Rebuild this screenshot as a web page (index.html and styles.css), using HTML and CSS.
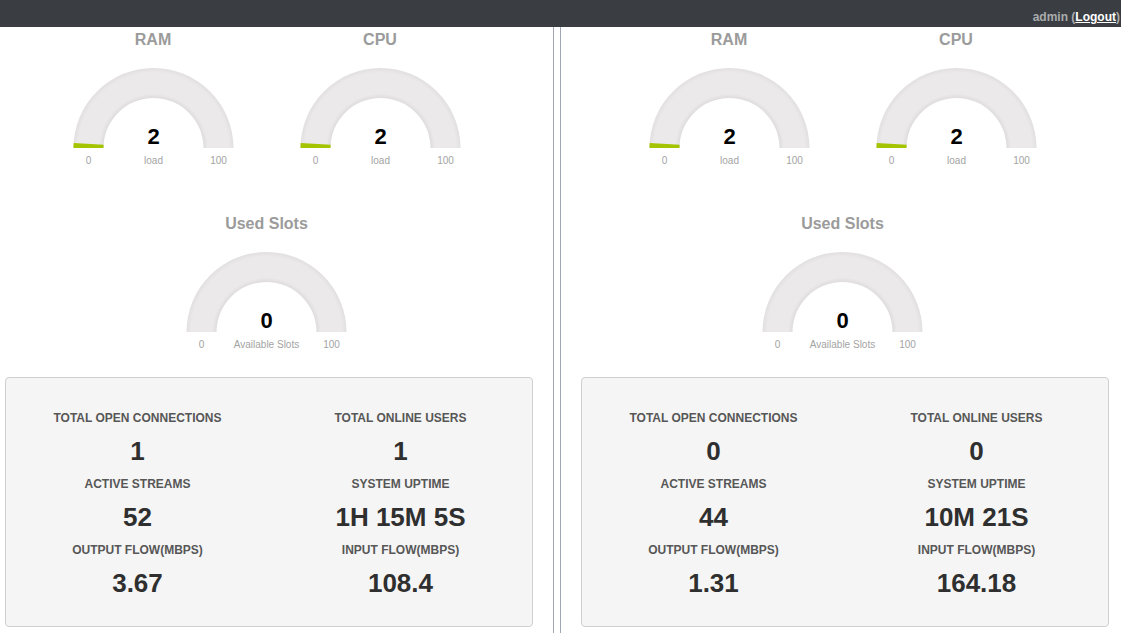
FILE: index.html
```html
<!DOCTYPE html>
<html>
<head>
<meta charset="utf-8">
<link rel="stylesheet" href="styles.css">
</head>
<body>
<div class="topbar"><span class="user">admin (<a class="logout" href="#">Logout</a>)</span></div>
<div class="panels">
  <div class="panel panel-left">
    <div class="gauges">
      <div class="gauge-row">
        <div class="gauge">
          <div class="gauge-title">RAM</div>
          <svg class="gauge-svg" width="227" height="120" viewBox="0 0 227 120">
            <defs>
              <radialGradient id="g1" gradientUnits="userSpaceOnUse" cx="113.5" cy="99" r="80">
                <stop offset="0.625" stop-color="#dedcdc"/>
                <stop offset="0.68" stop-color="#ebe9e9"/>
                <stop offset="0.94" stop-color="#ebe9e9"/>
                <stop offset="1" stop-color="#e1dfdf"/>
              </radialGradient>
            </defs>
            <path d="M33.5 99 A80 80 0 0 1 193.5 99 L163.5 99 A50 50 0 0 0 63.5 99 Z" fill="url(#g1)"/>
            <path d="M33.5 99 A80 80 0 0 1 33.66 93.98 L63.6 95.86 A50 50 0 0 0 63.5 99 Z" fill="#a4c400"/>
            <text class="g-value" x="113.5" y="95">2</text>
            <text class="g-label" x="48.5" y="115">0</text>
            <text class="g-label" x="113.5" y="115">load</text>
            <text class="g-label" x="178.5" y="115">100</text>
          </svg>
        </div>
        <div class="gauge">
          <div class="gauge-title">CPU</div>
          <svg class="gauge-svg" width="227" height="120" viewBox="0 0 227 120">
            <path d="M33.5 99 A80 80 0 0 1 193.5 99 L163.5 99 A50 50 0 0 0 63.5 99 Z" fill="url(#g1)"/>
            <path d="M33.5 99 A80 80 0 0 1 33.66 93.98 L63.6 95.86 A50 50 0 0 0 63.5 99 Z" fill="#a4c400"/>
            <text class="g-value" x="113.5" y="95">2</text>
            <text class="g-label" x="48.5" y="115">0</text>
            <text class="g-label" x="113.5" y="115">load</text>
            <text class="g-label" x="178.5" y="115">100</text>
          </svg>
        </div>
      </div>
      <div class="gauge-row gauge-row-2">
        <div class="gauge">
          <div class="gauge-title">Used Slots</div>
          <svg class="gauge-svg" width="227" height="120" viewBox="0 0 227 120">
            <path d="M33.5 99 A80 80 0 0 1 193.5 99 L163.5 99 A50 50 0 0 0 63.5 99 Z" fill="url(#g1)"/>
            <text class="g-value" x="113.5" y="95">0</text>
            <text class="g-label" x="48.5" y="115">0</text>
            <text class="g-label" x="113.5" y="115">Available Slots</text>
            <text class="g-label" x="178.5" y="115">100</text>
          </svg>
        </div>
      </div>
    </div>
    <div class="stats">
      <div class="stat"><div class="stat-label">Total Open Connections</div><div class="stat-value">1</div></div>
      <div class="stat"><div class="stat-label">Total Online Users</div><div class="stat-value">1</div></div>
      <div class="stat"><div class="stat-label">Active Streams</div><div class="stat-value">52</div></div>
      <div class="stat"><div class="stat-label">System Uptime</div><div class="stat-value">1H 15M 5S</div></div>
      <div class="stat"><div class="stat-label">Output Flow(Mbps)</div><div class="stat-value">3.67</div></div>
      <div class="stat"><div class="stat-label">Input Flow(Mbps)</div><div class="stat-value">108.4</div></div>
    </div>
  </div>
  <div class="panel panel-right">
    <div class="gauges">
      <div class="gauge-row">
        <div class="gauge">
          <div class="gauge-title">RAM</div>
          <svg class="gauge-svg" width="227" height="120" viewBox="0 0 227 120">
            <path d="M33.5 99 A80 80 0 0 1 193.5 99 L163.5 99 A50 50 0 0 0 63.5 99 Z" fill="url(#g1)"/>
            <path d="M33.5 99 A80 80 0 0 1 33.66 93.98 L63.6 95.86 A50 50 0 0 0 63.5 99 Z" fill="#a4c400"/>
            <text class="g-value" x="113.5" y="95">2</text>
            <text class="g-label" x="48.5" y="115">0</text>
            <text class="g-label" x="113.5" y="115">load</text>
            <text class="g-label" x="178.5" y="115">100</text>
          </svg>
        </div>
        <div class="gauge">
          <div class="gauge-title">CPU</div>
          <svg class="gauge-svg" width="227" height="120" viewBox="0 0 227 120">
            <path d="M33.5 99 A80 80 0 0 1 193.5 99 L163.5 99 A50 50 0 0 0 63.5 99 Z" fill="url(#g1)"/>
            <path d="M33.5 99 A80 80 0 0 1 33.66 93.98 L63.6 95.86 A50 50 0 0 0 63.5 99 Z" fill="#a4c400"/>
            <text class="g-value" x="113.5" y="95">2</text>
            <text class="g-label" x="48.5" y="115">0</text>
            <text class="g-label" x="113.5" y="115">load</text>
            <text class="g-label" x="178.5" y="115">100</text>
          </svg>
        </div>
      </div>
      <div class="gauge-row gauge-row-2">
        <div class="gauge">
          <div class="gauge-title">Used Slots</div>
          <svg class="gauge-svg" width="227" height="120" viewBox="0 0 227 120">
            <path d="M33.5 99 A80 80 0 0 1 193.5 99 L163.5 99 A50 50 0 0 0 63.5 99 Z" fill="url(#g1)"/>
            <text class="g-value" x="113.5" y="95">0</text>
            <text class="g-label" x="48.5" y="115">0</text>
            <text class="g-label" x="113.5" y="115">Available Slots</text>
            <text class="g-label" x="178.5" y="115">100</text>
          </svg>
        </div>
      </div>
    </div>
    <div class="stats">
      <div class="stat"><div class="stat-label">Total Open Connections</div><div class="stat-value">0</div></div>
      <div class="stat"><div class="stat-label">Total Online Users</div><div class="stat-value">0</div></div>
      <div class="stat"><div class="stat-label">Active Streams</div><div class="stat-value">44</div></div>
      <div class="stat"><div class="stat-label">System Uptime</div><div class="stat-value">10M 21S</div></div>
      <div class="stat"><div class="stat-label">Output Flow(Mbps)</div><div class="stat-value">1.31</div></div>
      <div class="stat"><div class="stat-label">Input Flow(Mbps)</div><div class="stat-value">164.18</div></div>
    </div>
  </div>
</div>
</body>
</html>
```
FILE: styles.css
```css
* { box-sizing: border-box; }
html, body { margin: 0; padding: 0; }
body {
  font-family: "Liberation Sans", Arial, sans-serif;
  background: #ffffff;
  height: 100vh;
  display: flex;
  flex-direction: column;
  overflow: hidden;
}
.topbar {
  height: 27px;
  flex: none;
  background: #3a3e42;
  display: flex;
  justify-content: flex-end;
  align-items: flex-end;
  padding: 0 1px 3px 0;
}
.user {
  font-size: 12px;
  font-weight: bold;
  line-height: 14px;
  color: #a9abad;
}
.logout {
  color: #ffffff;
  text-decoration: underline;
}
.panels {
  flex: 1;
  display: flex;
  gap: 6px;
}
.panel {
  display: flex;
  flex-direction: column;
}
.panel-left {
  width: 554px;
  padding: 0 20px 0 5px;
  border-right: 1px solid #a2a6b2;
}
.panel-right {
  width: 561px;
  padding: 0 12px 0 20px;
  border-left: 1px solid #a2a6b2;
}
.gauges {
  margin-right: 5px;
}
.gauge-row {
  display: flex;
  justify-content: center;
  margin-top: 2px;
}
.gauge-row-2 {
  margin-top: 44px;
}
.gauge {
  width: 227px;
  display: flex;
  flex-direction: column;
  align-items: center;
}
.gauge-title {
  font-size: 16px;
  font-weight: bold;
  line-height: 20px;
  color: #9b9b9b;
  padding-top: 1px;
  margin-bottom: -1px;
}
.gauge-svg {
  display: block;
}
.g-value {
  font-family: "Liberation Sans", Arial, sans-serif;
  font-size: 22px;
  font-weight: bold;
  fill: #010101;
  text-anchor: middle;
}
.g-label {
  font-family: "Liberation Sans", Arial, sans-serif;
  font-size: 10px;
  fill: #a3a3a3;
  text-anchor: middle;
}
.stats {
  margin-top: 24px;
  height: 250px;
  background: #f5f5f5;
  border: 1px solid #cfcfcf;
  border-radius: 4px;
  display: grid;
  grid-template-columns: 1fr 1fr;
  align-content: start;
  padding-top: 32px;
}
.stat {
  text-align: center;
}
.stat-label {
  font-size: 12px;
  font-weight: bold;
  line-height: 16px;
  color: #575757;
  text-transform: uppercase;
  margin-bottom: 10px;
}
.stat-value {
  font-size: 26px;
  font-weight: bold;
  line-height: 30px;
  color: #2f2f2f;
  margin-bottom: 10px;
}
```
